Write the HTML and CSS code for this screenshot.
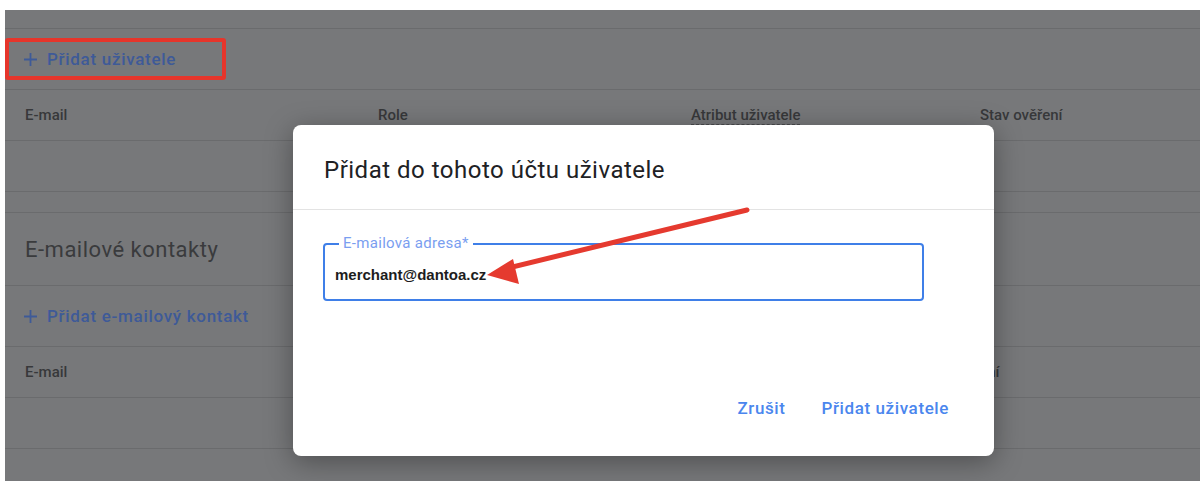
FILE: index.html
```html
<!DOCTYPE html>
<html lang="cs">

<head>
    <meta charset="UTF-8">
    <meta name="viewport" content="width=device-width, initial-scale=1.0">
    <title>Uživatelé a kontakty</title>
    <link rel="stylesheet" href="styles.css">
</head>

<body>
    <div class="page">
        <div class="toolbar"></div>

        <div class="action-row">
            <div class="highlight">
                <span class="add-link">
                    <svg class="plus" width="15" height="15" viewBox="0 0 15 15">
                        <path d="M7.5 1v13M1 7.5h13" stroke="currentColor" stroke-width="1.8" />
                    </svg>
                    Přidat uživatele
                </span>
            </div>
        </div>

        <div class="table-head users-cols">
            <div>E-mail</div>
            <div>Role</div>
            <div class="dashed">Atribut uživatele</div>
            <div>Stav ověření</div>
        </div>
        <div class="table-row"></div>

        <div class="spacer"></div>

        <div class="section-title">E-mailové kontakty</div>

        <div class="action-row contact-action">
            <span class="add-link">
                <svg class="plus" width="15" height="15" viewBox="0 0 15 15">
                    <path d="M7.5 1v13M1 7.5h13" stroke="currentColor" stroke-width="1.8" />
                </svg>
                Přidat e-mailový kontakt
            </span>
        </div>

        <div class="table-head contacts-cols">
            <div>E-mail</div>
            <div>Stav ověření</div>
        </div>
        <div class="table-row"></div>
    </div>

    <!-- dialog over the dimmed page -->
    <div class="dialog">
        <div class="dialog-title">Přidat do tohoto účtu uživatele</div>
        <div class="dialog-body">
            <div class="field">
                <span class="field-label">E-mailová adresa*</span>
                <div class="field-value">merchant@dantoa.cz</div>
            </div>
        </div>
        <div class="dialog-actions">
            <span class="text-button">Zrušit</span>
            <span class="text-button">Přidat uživatele</span>
        </div>
    </div>

    <!-- annotation arrow -->
    <svg class="annotation" width="1200" height="481" viewBox="0 0 1200 481">
        <line x1="747" y1="210" x2="508" y2="268" stroke="#e53a2f" stroke-width="5" stroke-linecap="round" />
        <polygon points="487,275 513,259 519,284" fill="#e53a2f" />
    </svg>
</body>

</html>
```

FILE: styles.css
```css
body {
    margin: 0;
    background: #fff;
    font-family: Roboto, "Noto Sans", sans-serif;
    height: 481px;
    overflow: hidden;
}

.page {
    margin: 10px 0 0 5px;
    height: 471px;
    background: #77787a;
}

.toolbar {
    height: 18px;
    border-bottom: 1px solid #6a6b6d;
}

.action-row {
    height: 60px;
    display: flex;
    align-items: center;
    border-bottom: 1px solid #6a6b6d;
}

.highlight {
    width: 199px;
    height: 34px;
    border: 4px solid #e6352b;
    border-radius: 3px;
    display: flex;
    align-items: center;
    padding-left: 14px;
}

.add-link {
    color: #3e5a98;
    font-size: 17px;
    font-weight: 500;
    letter-spacing: 0.7px;
    display: flex;
    align-items: center;
}

.plus {
    margin-right: 9px;
}

.contact-action {
    padding-left: 18px;
}

.table-head {
    height: 50px;
    display: grid;
    align-items: center;
    padding-left: 20px;
    border-bottom: 1px solid #6a6b6d;
    color: #37383a;
    font-size: 15px;
    font-weight: 500;
}

.users-cols {
    grid-template-columns: 353px 313px 289px 1fr;
}

.contacts-cols {
    grid-template-columns: 892px 1fr;
}

.dashed {
    justify-self: start;
    border-bottom: 1px dashed #4a4b4d;
}

.table-row {
    height: 50px;
    border-bottom: 1px solid #6a6b6d;
}

.spacer {
    height: 20px;
    border-bottom: 1px solid #6a6b6d;
}

.section-title {
    height: 72px;
    display: flex;
    align-items: center;
    padding-left: 20px;
    font-size: 22px;
    letter-spacing: 0.5px;
    color: #3a3b3d;
    border-bottom: 1px solid #6a6b6d;
}

.dialog {
    position: absolute;
    left: 293px;
    top: 125px;
    width: 701px;
    height: 331px;
    background: #fff;
    border-radius: 8px;
    box-shadow: 0 6px 28px rgba(0, 0, 0, 0.35);
    display: flex;
    flex-direction: column;
}

.dialog-title {
    height: 78px;
    padding-top: 6px;
    display: flex;
    align-items: center;
    padding-left: 31px;
    font-size: 24px;
    letter-spacing: 0.5px;
    color: #202124;
    border-bottom: 1px solid #e3e3e3;
}

.dialog-body {
    padding: 33px 70px 0 30px;
}

.field {
    position: relative;
    height: 54px;
    border: 2px solid #3f7fe8;
    border-radius: 4px;
    display: flex;
    align-items: center;
    padding-left: 10px;
}

.field-label {
    position: absolute;
    left: 14px;
    top: -11px;
    background: #fff;
    padding: 0 4px;
    font-size: 15px;
    letter-spacing: 0.3px;
    color: #7a9ef0;
}

.field-value {
    font-family: "Liberation Sans", Arial, sans-serif;
    font-weight: bold;
    font-size: 15px;
    color: #1d1d1d;
    margin-top: 5px;
}

.dialog-actions {
    margin-top: auto;
    height: 96px;
    display: flex;
    justify-content: flex-end;
    align-items: center;
    gap: 36px;
    padding-right: 45px;
}

.text-button {
    color: #4a86ee;
    font-size: 17px;
    font-weight: 500;
    letter-spacing: 0.6px;
}

.annotation {
    position: absolute;
    left: 0;
    top: 0;
}
```
